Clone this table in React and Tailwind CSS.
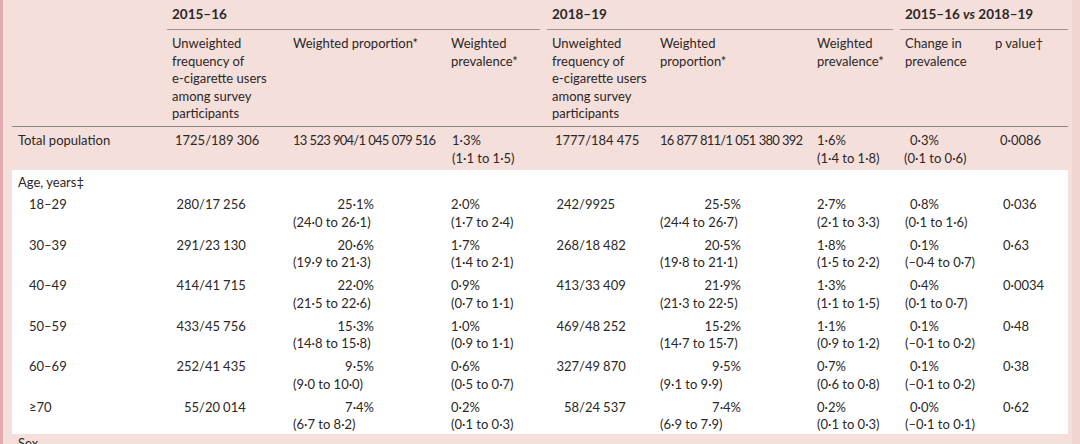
import React from "react";

const W = ["w-[155px]", "w-[121px]", "w-[158px]", "w-[101px]", "w-[108px]", "w-[157px]", "w-[88px]", "w-[90px]", "w-[78px]"];

const T = "|";

function N({ v }) {
  const parts = v.split("|");
  return (
    <>
      {parts.map((p, i) => (
        <React.Fragment key={i}>
          {i > 0 && <span className="inline-block w-[3px]" />}
          {p}
        </React.Fragment>
      ))}
    </>
  );
}

const rows = [
  ["18–29", "280/", `17${T}256`, "25·1%", "(24·0 to 26·1)", "2·0%", "(1·7 to 2·4)", "242/", "9925", "25·5%", "(24·4 to 26·7)", "2·7%", "(2·1 to 3·3)", "0·8%", "(0·1 to 1·6)", "0·036"],
  ["30–39", "291/", `23${T}130`, "20·6%", "(19·9 to 21·3)", "1·7%", "(1·4 to 2·1)", "268/", `18${T}482`, "20·5%", "(19·8 to 21·1)", "1·8%", "(1·5 to 2·2)", "0·1%", "(–0·4 to 0·7)", "0·63"],
  ["40–49", "414/", `41${T}715`, "22·0%", "(21·5 to 22·6)", "0·9%", "(0·7 to 1·1)", "413/", `33${T}409`, "21·9%", "(21·3 to 22·5)", "1·3%", "(1·1 to 1·5)", "0·4%", "(0·1 to 0·7)", "0·0034"],
  ["50–59", "433/", `45${T}756`, "15·3%", "(14·8 to 15·8)", "1·0%", "(0·9 to 1·1)", "469/", `48${T}252`, "15·2%", "(14·7 to 15·7)", "1·1%", "(0·9 to 1·2)", "0·1%", "(–0·1 to 0·2)", "0·48"],
  ["60–69", "252/", `41${T}435`, "9·5%", "(9·0 to 10·0)", "0·6%", "(0·5 to 0·7)", "327/", `49${T}870`, "9·5%", "(9·1 to 9·9)", "0·7%", "(0·6 to 0·8)", "0·1%", "(–0·1 to 0·2)", "0·38"],
  ["≥70", "55/", `20${T}014`, "7·4%", "(6·7 to 8·2)", "0·2%", "(0·1 to 0·3)", "58/", `24${T}537`, "7·4%", "(6·9 to 7·9)", "0·2%", "(0·1 to 0·3)", "0·0%", "(–0·1 to 0·1)", "0·62"],
];

function Head({ w, children, pl = "pl-[5px]" }) {
  return <div className={`${w} ${pl} shrink-0 whitespace-nowrap`}>{children}</div>;
}

export default function App() {
  return (
    <div className="w-[1080px] h-[444px] overflow-hidden bg-[#f5dfdb] border-l-[3px] border-l-[#e4adb2] border-r-[8px] border-r-[#f1d5d1] font-['Lato',sans-serif] text-[13px] leading-[17.5px] text-[#2b2727]">
      <div className="ml-[9px] w-[1056px]">
        {/* group headings */}
        <div className="flex h-[30px] font-bold text-[13.5px]">
          <div className="w-[155px] shrink-0" />
          <div className="w-[380px] shrink-0 pr-[7px]">
            <div className="h-[30px] pt-[6px] pl-[5px] border-b border-[#9d9391]">2015–16</div>
          </div>
          <div className="w-[353px] shrink-0 pr-[7px]">
            <div className="h-[30px] pt-[6px] pl-[5px] border-b border-[#9d9391]">2018–19</div>
          </div>
          <div className="w-[168px] shrink-0">
            <div className="h-[30px] pt-[6px] pl-[5px] border-b border-[#9d9391]">
              2015–16 <i>vs</i> 2018–19
            </div>
          </div>
        </div>

        {/* sub headings */}
        <div className="flex h-[97px] pt-[5px] border-b border-[#8f8583]">
          <Head w={W[0]} />
          <Head w={W[1]}>Unweighted<br />frequency of<br />e-cigarette users<br />among survey<br />participants</Head>
          <Head w={W[2]}>Weighted proportion*</Head>
          <Head w={W[3]}>Weighted<br />prevalence*</Head>
          <Head w={W[4]}>Unweighted<br />frequency of<br />e-cigarette users<br />among survey<br />participants</Head>
          <Head w={W[5]}>Weighted<br />proportion*</Head>
          <Head w={W[6]}>Weighted<br />prevalence*</Head>
          <Head w={W[7]}>Change in<br />prevalence</Head>
          <Head w={W[8]}>p value†</Head>
        </div>

        {/* total population */}
        <div className="flex h-[43px] pt-[5px]">
          <Head w={W[0]} pl="pl-[6px]">Total population</Head>
          <Head w={W[1]} pl="pl-[8px]"><N v={`1725/189${T}306`} /></Head>
          <Head w={W[2]} pl="pl-[5px]">
            <span className="tracking-[-0.75px]"><N v={`13${T}523${T}904/1${T}045${T}079${T}516`} /></span>
          </Head>
          <Head w={W[3]} pl="pl-[6px]">1·3%<br />(1·1 to 1·5)</Head>
          <Head w={W[4]} pl="pl-[8px]"><N v={`1777/184${T}475`} /></Head>
          <Head w={W[5]} pl="pl-[5px]">
            <span className="tracking-[-0.75px]"><N v={`16${T}877${T}811/1${T}051${T}380${T}392`} /></span>
          </Head>
          <Head w={W[6]} pl="pl-[5px]">1·6%<br />(1·4 to 1·8)</Head>
          <Head w={W[7]} pl="pl-[4px]"><span className="pl-[6px]">0·3%</span><br />(0·1 to 0·6)</Head>
          <Head w={W[8]} pl="pl-[10px]">0·0086</Head>
        </div>

        {/* white panel */}
        <div className="bg-white h-[264px] pt-[4px] flex flex-col">
          <div className="pl-[6px] h-[17.5px]">Age, years‡</div>
          <div className="flex flex-col gap-[5.5px] mt-[4.75px]">
            {rows.map((r) => (
              <div key={r[0]} className="flex h-[35px]">
                <Head w={W[0]} pl="pl-[17px]">{r[0]}</Head>
                <div className={`${W[1]} shrink-0 flex whitespace-nowrap`}>
                  <span className="w-[38px] text-right shrink-0">{r[1]}</span>
                  <span><N v={r[2]} /></span>
                </div>
                <div className={`${W[2]} shrink-0 whitespace-nowrap`}>
                  <div className="w-[86px] text-right">{r[3]}</div>
                  <div className="pl-[5px]">{r[4]}</div>
                </div>
                <Head w={W[3]} pl="pl-[5px]">{r[5]}<br />{r[6]}</Head>
                <div className={`${W[4]} shrink-0 flex whitespace-nowrap`}>
                  <span className="w-[38px] text-right shrink-0">{r[7]}</span>
                  <span><N v={r[8]} /></span>
                </div>
                <div className={`${W[5]} shrink-0 whitespace-nowrap`}>
                  <div className="w-[86px] text-right">{r[9]}</div>
                  <div className="pl-[5px]">{r[10]}</div>
                </div>
                <Head w={W[6]} pl="pl-[5px]">{r[11]}<br />{r[12]}</Head>
                <Head w={W[7]} pl="pl-[5px]"><span className="pl-[5px]">{r[13]}</span><br />{r[14]}</Head>
                <Head w={W[8]} pl="pl-[13px]">{r[15]}</Head>
              </div>
            ))}
          </div>
        </div>
        <div className="pl-[6px] pt-[1px]">Sex</div>
      </div>
    </div>
  );
}
